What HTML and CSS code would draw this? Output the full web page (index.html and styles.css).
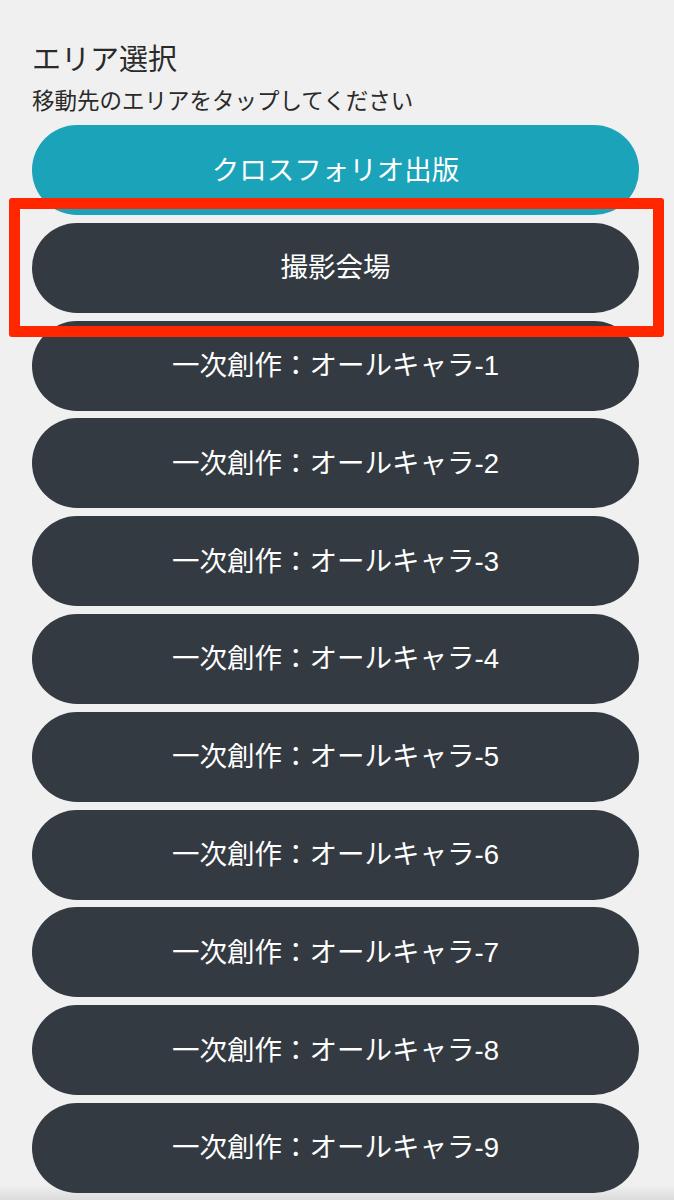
FILE: index.html
```html
<!DOCTYPE html>
<html lang="ja">
<head>
<meta charset="utf-8">
<title>エリア選択</title>
<link rel="stylesheet" href="styles.css">
</head>
<body>
<main class="page">
  <h1 class="title">エリア選択</h1>
  <p class="subtitle">移動先のエリアをタップしてください</p>
  <div class="list">
    <button class="area area-active">クロスフォリオ出版</button>
    <button class="area">撮影会場</button>
    <button class="area">一次創作：オールキャラ-1</button>
    <button class="area">一次創作：オールキャラ-2</button>
    <button class="area">一次創作：オールキャラ-3</button>
    <button class="area">一次創作：オールキャラ-4</button>
    <button class="area">一次創作：オールキャラ-5</button>
    <button class="area">一次創作：オールキャラ-6</button>
    <button class="area">一次創作：オールキャラ-7</button>
    <button class="area">一次創作：オールキャラ-8</button>
    <button class="area">一次創作：オールキャラ-9</button>
  </div>
  <div class="highlight"></div>
</main>
</body>
</html>
```

FILE: styles.css
```css
html, body {
  margin: 0;
  padding: 0;
  background: #f0f0f0;
  overflow: hidden;
}
body {
  font-family: "Liberation Sans", "Noto Sans CJK JP", sans-serif;
  color: #2a2a2a;
}
.page {
  position: relative;
  padding: 40px 35px 0 32px;
  height: 1160px;
  overflow: hidden;
  background: linear-gradient(to bottom, #f0f0f0 0, #f0f0f0 1185px, #dcdcdc 1200px);
}
.title {
  margin: 0;
  font-size: 29px;
  line-height: 40px;
  font-weight: 400;
}
.subtitle {
  margin: 6px 0 0;
  font-size: 22.5px;
  line-height: 32px;
}
.list {
  margin-top: 7px;
  display: flex;
  flex-direction: column;
  gap: 7.8px;
}
.area {
  display: block;
  width: 607px;
  height: 90px;
  flex: none;
  border: none;
  border-radius: 45px;
  background: #343a41;
  color: #ffffff;
  font-family: "Liberation Sans", "Noto Sans CJK JP", sans-serif;
  font-size: 27.5px;
  padding: 0 0 5px;
  text-align: center;
}
.area-active {
  background: #1ba3b9;
}
.highlight {
  position: absolute;
  left: 9px;
  top: 198px;
  width: 633px;
  height: 117px;
  border: 11px solid #ff2600;
  border-radius: 3px;
}
```
